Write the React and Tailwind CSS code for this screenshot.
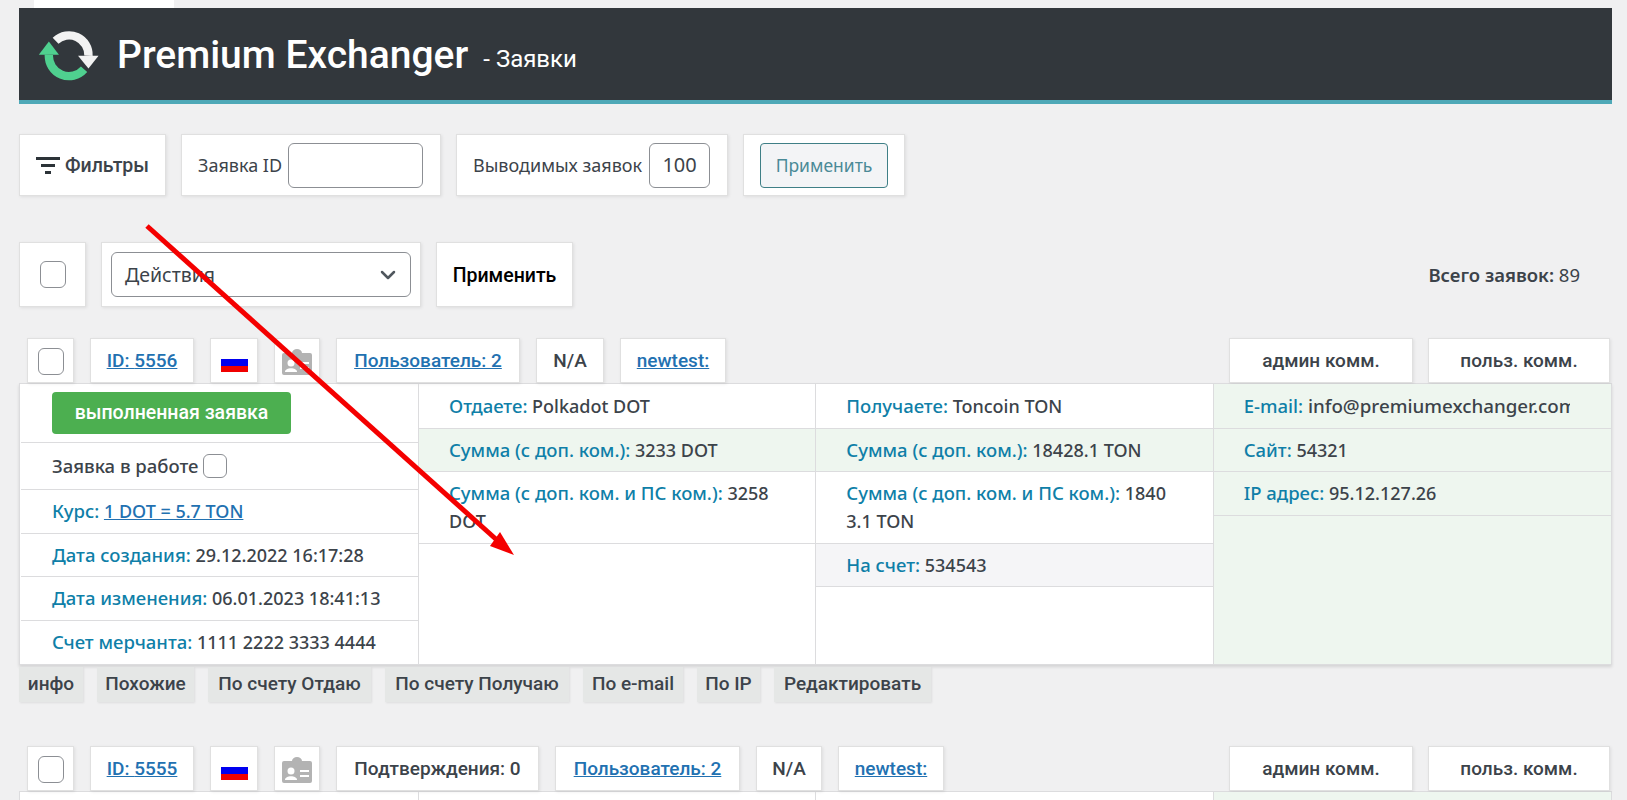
import React from 'react';
import { ChevronDown } from 'lucide-react';

const boxClass = 'bg-white border border-[#e0e0e0] shadow-[1px_1px_3px_rgba(0,0,0,0.08)] flex items-center';
const linkClass = 'text-[#2271b1] underline';
const checkClass = 'block w-[26px] h-[27px] bg-white border border-[#8c8f94] rounded-[6px]';
const labelClass = 'text-[#0f7fa8] text-[18.5px]';
const rowClass = 'pl-[30px] pr-[24px] py-[7.25px] leading-[28px] border-b border-[#dcdcde]';

function Logo() {
  return (
    <svg className="shrink-0 w-[64px] h-[52px]" viewBox="50 60 190 155" fill="none">
      <path d="M105 95 A58 58 0 0 1 203 140" stroke="#f2f2f2" strokeWidth="25" />
      <polygon points="172,140 233,140 203,178" fill="#f2f2f2" />
      <path d="M190 180 A60 60 0 0 1 85 137" stroke="#4fd08f" strokeWidth="25" />
      <polygon points="55,137 115,137 85,97" fill="#4fd08f" />
    </svg>
  );
}

function Flag() {
  return (
    <svg className="block" width="27" height="18" viewBox="0 0 27 18">
      <rect width="27" height="5" fill="#fff" />
      <rect y="5" width="27" height="7" fill="#0000f0" />
      <rect y="12" width="27" height="6" fill="#f00000" />
    </svg>
  );
}

function CardIcon() {
  return (
    <svg className="block" width="30" height="26" viewBox="0 0 30 26">
      <path d="M2 4 H10 A5 4 0 0 1 20 4 H28 A2 2 0 0 1 30 6 V24 A2 2 0 0 1 28 26 H2 A2 2 0 0 1 0 24 V6 A2 2 0 0 1 2 4 Z" fill="#b3b3b3" />
      <circle cx="9" cy="14" r="3.5" fill="#fff" />
      <path d="M3 23 C3 18 15 18 15 23 Z" fill="#fff" />
      <rect x="18" y="13" width="9" height="2" fill="#fff" />
      <rect x="18" y="18" width="9" height="2" fill="#fff" />
    </svg>
  );
}

function Tab({ className = '', children }) {
  return (
    <div className={`${boxClass} h-[45px] justify-center font-['Roboto',sans-serif] text-[19px] font-medium text-[#3c434a] ${className}`}>
      {children}
    </div>
  );
}

function RecordTabs({ id, confirm }) {
  return (
    <div className="flex gap-4 pl-[8px] pr-[2px] h-[45px]">
      <Tab className="w-[47px] pt-[2px]"><span className={checkClass} /></Tab>
      <Tab className="w-[104px] pt-[2px]"><a className={linkClass}>ID: {id}</a></Tab>
      <Tab className="w-[48px] items-end pb-[10px]"><Flag /></Tab>
      <Tab className="w-[46px] items-end pb-[7px]"><CardIcon /></Tab>
      {confirm && <Tab className="w-[203px] pt-[2px]">Подтверждения: 0</Tab>}
      <Tab className={confirm ? 'w-[185px] pt-[2px]' : 'w-[184px] pt-[2px]'}><a className={linkClass}>Пользователь: 2</a></Tab>
      <Tab className={confirm ? 'w-[66px] pt-[2px]' : 'w-[68px] pt-[2px]'}>N/A</Tab>
      <Tab className="w-[106px] pt-[2px]"><a className={linkClass}>newtest:</a></Tab>
      <div className="ml-auto flex gap-[15px]">
        <Tab className="w-[184px] pt-[2px]">админ комм.</Tab>
        <Tab className="w-[182px] pt-[2px]">польз. комм.</Tab>
      </div>
    </div>
  );
}

function Row({ label, children, className = '' }) {
  return (
    <div className={`${rowClass} ${className}`}>
      <span className={labelClass}>{label}:</span> {children}
    </div>
  );
}

function OrderTable() {
  return (
    <div className="grid grid-cols-[399px_1fr_1fr_1fr] h-[282px] bg-white border border-[#dcdcde] shadow-[0_2px_3px_rgba(0,0,0,0.12)] text-[18px] font-medium text-[#3c434a]">
      <div className="pl-[1px] border-r border-[#dcdcde]">
        <div className="h-[59px] pl-[31px] pt-[8px] border-b border-[#dcdcde]">
          <div className="w-[239px] h-[42px] rounded-[4px] bg-[#4caf50] flex items-center justify-center text-white font-['Roboto',sans-serif] text-[19.5px]">
            выполненная заявка
          </div>
        </div>
        <div className="h-[47px] pl-[31px] flex items-center gap-[5px] border-b border-[#dcdcde]">
          <span className="text-[18.5px]">Заявка в работе</span> <span className="block w-[24px] h-[24px] rounded-[6px] border border-[#8c8f94]" />
        </div>
        <Row label="Курс" className="!pl-[31px]"><a className={linkClass}>1 DOT = 5.7 TON</a></Row>
        <Row label="Дата создания" className="!pl-[31px]">29.12.2022 16:17:28</Row>
        <Row label="Дата изменения" className="!pl-[31px]">06.01.2023 18:41:13</Row>
        <Row label="Счет мерчанта" className="!pl-[31px] border-b-0">1111 2222 3333 4444</Row>
      </div>
      <div className="pt-[1px] border-r border-[#dcdcde]">
        <Row label="Отдаете">Polkadot DOT</Row>
        <Row label="Сумма (с доп. ком.)" className="bg-[#eef6ef]">3233 DOT</Row>
        <Row label="Сумма (с доп. ком. и ПС ком.)">3258 DOT</Row>
      </div>
      <div className="pt-[1px] border-r border-[#dcdcde]">
        <Row label="Получаете">Toncoin TON</Row>
        <Row label="Сумма (с доп. ком.)" className="bg-[#eef6ef]">18428.1 TON</Row>
        <Row label="Сумма (с доп. ком. и ПС ком.)">1840<br />3.1 TON</Row>
        <Row label="На счет" className="bg-[#f5f5f7]">534543</Row>
      </div>
      <div className="pt-[1px] bg-[#eef6ef]">
        {/* long address gets cut off at the column padding */}
        <div className={rowClass}>
          <div className="w-[326px] overflow-hidden whitespace-nowrap text-[18.75px]">
            <span className={labelClass}>E-mail:</span> info@premiumexchanger.com
          </div>
        </div>
        <Row label="Сайт">54321</Row>
        <Row label="IP адрес">95.12.127.26</Row>
      </div>
    </div>
  );
}

const actions = [
  ['инфо', 'w-[64px]'],
  ['Похожие', 'w-[97px]'],
  ['По счету Отдаю', 'w-[163px]'],
  ['По счету Получаю', 'w-[184px]'],
  ['По e-mail', 'w-[100px]'],
  ['По IP', 'w-[63px]'],
  ['Редактировать', 'w-[157px]'],
];

export default function App() {
  return (
    <div className="relative h-[800px] overflow-hidden bg-[#f0f0f1] pl-[19px] pr-[15px] font-['Noto_Sans',sans-serif] text-[#3c434a]">
      <div className="ml-[15px] w-[140px] h-2 bg-white" />

      <div className="h-[96px] pl-[18px] pt-[2px] flex items-center bg-[#32373c] border-b-4 border-[#4ea8b7] font-['Roboto',sans-serif] text-white">
        <Logo />
        <span className="ml-[16px] text-[39px] font-medium">Premium Exchanger</span>
        <span className="ml-[15px] mt-[8px] text-[24px]">- Заявки</span>
      </div>

      <div className="mt-[30px] flex gap-[15px] h-[62px] text-[18px]">
        <div className={`${boxClass} w-[147px] pl-[16px] pt-[2px] gap-[5px] font-['Roboto',sans-serif] font-medium text-[19.5px]`}>
          <svg width="24" height="18" viewBox="0 0 24 18" fill="#2c3338">
            <rect width="24" height="3" />
            <rect x="5" y="7" width="14" height="3" />
            <rect x="9" y="14" width="6" height="3" />
          </svg>
          Фильтры
        </div>
        <div className={`${boxClass} w-[260px] pl-[16px] gap-[6px]`}>
          Заявка ID
          <span className="block w-[135px] h-[45px] bg-white border border-[#8c8f94] rounded-[6px]" />
        </div>
        <div className={`${boxClass} w-[272px] pl-[16px] gap-[7px]`}>
          Выводимых заявок
          <span className="flex items-center justify-center w-[61px] h-[45px] bg-white border border-[#8c8f94] rounded-[6px] text-[20px]">100</span>
        </div>
        <div className={`${boxClass} w-[162px] justify-center`}>
          <span className="flex items-center justify-center w-[128px] h-[45px] bg-[#f3f4f6] border border-[#3f7f86] rounded-[4px] text-[17.5px] text-[#4a8a97]">Применить</span>
        </div>
      </div>

      <div className="mt-[46px] flex h-[65px] gap-[15px] text-[18px]">
        <div className={`${boxClass} w-[67px] justify-center`}><span className={checkClass} /></div>
        <div className={`${boxClass} w-[320px] justify-center`}>
          <div className="w-[300px] h-[45px] border border-[#8c8f94] rounded-[6px] pl-[13px] pr-[10px] flex items-center justify-between text-[19.5px]">
            Действия
            <ChevronDown size={24} strokeWidth={2.5} color="#50575e" />
          </div>
        </div>
        <div className={`${boxClass} w-[137px] pt-[3px] justify-center font-['Roboto',sans-serif] font-medium text-[19.5px] text-black`}>Применить</div>
        <div className="ml-auto mr-[32px] self-center pt-[1px] text-[18.5px]">
          <span className="font-semibold">Всего заявок:</span> 89
        </div>
      </div>

      <div className="mt-[31px]">
        <RecordTabs id="5556" />
        <OrderTable />
      </div>

      <div className="mt-[2px] flex gap-[14px] font-['Roboto',sans-serif] font-medium text-[19px]">
        {actions.map(([title, width]) => (
          <div key={title} className={`h-[35px] flex items-center justify-center bg-[#e5e7e6] shadow-[1px_1px_2px_rgba(0,0,0,0.08)] ${width}`}>
            {title}
          </div>
        ))}
      </div>

      <div className="mt-[44px]">
        <RecordTabs id="5555" confirm />
        <div className="grid grid-cols-[399px_1fr_1fr_1fr] h-[282px] bg-white border border-[#dcdcde]">
          <div className="border-r border-[#dcdcde]" />
          <div className="border-r border-[#dcdcde]" />
          <div className="border-r border-[#dcdcde]" />
          <div className="bg-[#eef6ef]" />
        </div>
      </div>

      {/* red annotation arrow over the page */}
      <svg className="absolute left-0 top-0 pointer-events-none" width="1627" height="800">
        <line x1="147" y1="226" x2="498" y2="541" stroke="#f40000" strokeWidth="5" />
        <polygon points="514,555 500,532 490,546" fill="#f40000" />
      </svg>
    </div>
  );
}
